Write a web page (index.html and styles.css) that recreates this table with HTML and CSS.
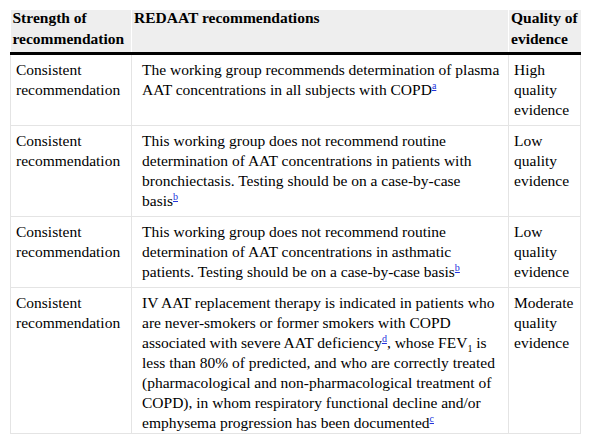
FILE: index.html
```html
<!DOCTYPE html>
<html>
<head>
<meta charset="utf-8">
<link rel="stylesheet" href="styles.css">
</head>
<body>
<table class="rec-table">
  <colgroup>
    <col class="c1">
    <col class="c2">
    <col class="c3">
  </colgroup>
  <thead>
    <tr>
      <th><div class="th-text">Strength of recommendation</div></th>
      <th><div class="th-text">REDAAT recommendations</div></th>
      <th><div class="th-text">Quality of evidence</div></th>
    </tr>
  </thead>
  <tbody>
    <tr>
      <td>Consistent recommendation</td>
      <td class="main">The working group recommends determination of plasma AAT concentrations in all subjects with COPD<sup><a href="#">a</a></sup></td>
      <td>High quality evidence</td>
    </tr>
    <tr>
      <td>Consistent recommendation</td>
      <td class="main">This working group does not recommend routine determination of AAT concentrations in patients with bronchiectasis. Testing should be on a case-by-case<br>basis<sup><a href="#">b</a></sup></td>
      <td>Low quality evidence</td>
    </tr>
    <tr>
      <td>Consistent recommendation</td>
      <td class="main">This working group does not recommend routine determination of AAT concentrations in asthmatic patients. Testing should be on a case-by-case basis<sup><a href="#">b</a></sup></td>
      <td>Low quality evidence</td>
    </tr>
    <tr class="last">
      <td>Consistent recommendation</td>
      <td class="main">IV AAT replacement therapy is indicated in patients who are never-smokers or former smokers with COPD associated with severe AAT deficiency<sup><a href="#">d</a></sup>, whose FEV<sub>1</sub> is less than 80% of predicted, and who are correctly treated (pharmacological and non-pharmacological treatment of COPD), in whom respiratory functional decline and/or emphysema progression has been documented<sup><a href="#">c</a></sup></td>
      <td>Moderate quality evidence</td>
    </tr>
  </tbody>
</table>
</body>
</html>
```

FILE: styles.css
```css
html, body {
  margin: 0;
  padding: 0;
  background: #fff;
}
body {
  padding: 10px;
  font-family: "Liberation Serif", "Times New Roman", serif;
  font-size: 15.5px;
  color: #000;
}
.rec-table {
  border-collapse: collapse;
  table-layout: fixed;
  width: 570px;
}
.c1 { width: 121px; }
.c2 { width: 377px; }
.c3 { width: 72px; }
.rec-table th {
  background: #eeeeee;
  text-align: left;
  vertical-align: top;
  font-weight: bold;
  line-height: 21px;
  padding: 0 2px;
  border-bottom: 3px solid #000;
}
.th-text {
  margin-top: -3px;
  margin-bottom: 3px;
}
.rec-table th + th {
  border-left: 1px solid #fff;
}
.rec-table td {
  vertical-align: top;
  line-height: 20px;
  padding: 5px 5px;
  border: 1px solid #e4e4e4;
}
.rec-table td.main {
  padding-left: 10px;
  padding-right: 6px;
}
.rec-table tr.last td {
  padding-bottom: 0;
}
.rec-table sup,
.rec-table sub {
  font-size: 10px;
  line-height: 0;
}
.rec-table sup {
  vertical-align: 6px;
}
.rec-table sub {
  vertical-align: -4px;
}
.rec-table a {
  color: #2233dd;
  text-decoration: underline;
}
```
